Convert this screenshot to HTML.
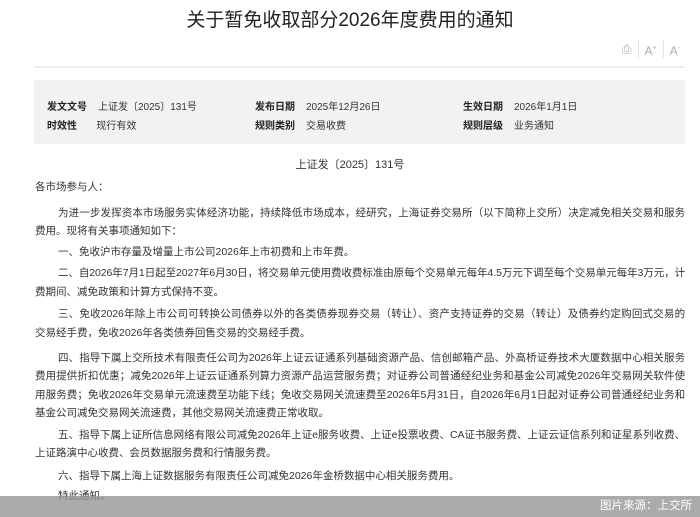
<!DOCTYPE html>
<html><head><meta charset="utf-8"><style>
*{margin:0;padding:0;box-sizing:border-box}
body{width:700px;height:517px;overflow:hidden;background:#fff;font-family:"Liberation Sans","Noto Sans CJK SC",sans-serif;color:#333;position:relative}
.title{position:absolute;top:5px;left:0;width:700px;text-align:center;font-size:19px;color:#222}
.icons{position:absolute;top:40px;right:14px;display:flex;align-items:center;color:#aaa;font-size:12px}
.icons span{display:inline-block;padding:0 6px;height:18px;line-height:18px}
.icons .sep{border-left:1px solid #e5e5e5}
.hr{position:absolute;top:66px;left:34px;width:651px;height:2px;background:#eee}
.meta{position:absolute;top:80px;left:34px;width:651px;height:64px;background:#f2f2f2;font-size:10px}
.meta div{position:absolute;white-space:nowrap}
.meta b{font-weight:bold;color:#222;margin-right:11px}
.doc{position:absolute;top:156px;left:0;width:700px;text-align:center;font-size:11px}
.body{position:absolute;left:35px;width:650px;font-size:10.5px;overflow:hidden;height:517px}
.l{position:absolute;left:0;white-space:nowrap;height:16px;line-height:16px}
.j{width:650px;text-align:justify;text-align-last:justify;letter-spacing:-0.1px}
.in{left:23px}
.in.j{width:627px}
.bar{position:absolute;left:0;top:496px;width:700px;height:21px;background:rgba(150,150,150,0.8);color:#fff;font-size:11.5px;text-align:right;padding-right:8px;line-height:21px}
</style></head><body>
<div class="title">关于暂免收取部分2026年度费用的通知</div>
<div class="icons"><span>&#9113;</span><span class="sep">A<sup style="font-size:7px">+</sup></span><span class="sep">A<sup style="font-size:7px">-</sup></span></div>
<div class="hr"></div>
<div class="meta">
<div style="left:13px;top:18px"><b>发文文号</b>上证发〔2025〕131号</div>
<div style="left:221px;top:18px"><b>发布日期</b>2025年12月26日</div>
<div style="left:429px;top:18px"><b>生效日期</b>2026年1月1日</div>
<div style="left:13px;top:37px"><b>时效性</b>&nbsp;&nbsp;&nbsp;现行有效</div>
<div style="left:221px;top:37px"><b>规则类别</b>交易收费</div>
<div style="left:429px;top:37px"><b>规则层级</b>业务通知</div>
</div>
<div class="doc">上证发〔2025〕131号</div>
<div class="body" style="top:0">
<div class="l" style="top:179px">各市场参与人：</div>
<div class="l in j" style="top:205px">为进一步发挥资本市场服务实体经济功能，持续降低市场成本，经研究，上海证券交易所（以下简称上交所）决定减免相关交易和服务</div>
<div class="l" style="top:223px">费用。现将有关事项通知如下：</div>
<div class="l in" style="top:244px">一、免收沪市存量及增量上市公司2026年上市初费和上市年费。</div>
<div class="l in j" style="top:265px">二、自2026年7月1日起至2027年6月30日，将交易单元使用费收费标准由原每个交易单元每年4.5万元下调至每个交易单元每年3万元，计</div>
<div class="l" style="top:284px">费期间、减免政策和计算方式保持不变。</div>
<div class="l in j" style="top:306px">三、免收2026年除上市公司可转换公司债券以外的各类债券现券交易（转让）、资产支持证券的交易（转让）及债券约定购回式交易的</div>
<div class="l" style="top:325px">交易经手费，免收2026年各类债券回售交易的交易经手费。</div>
<div class="l in j" style="top:350px">四、指导下属上交所技术有限责任公司为2026年上证云证通系列基础资源产品、信创邮箱产品、外高桥证券技术大厦数据中心相关服务</div>
<div class="l j" style="top:368px">费用提供折扣优惠；减免2026年上证云证通系列算力资源产品运营服务费；对证券公司普通经纪业务和基金公司减免2026年交易网关软件使</div>
<div class="l j" style="top:387px">用服务费；免收2026年交易单元流速费至功能下线；免收交易网关流速费至2026年5月31日，自2026年6月1日起对证券公司普通经纪业务和</div>
<div class="l" style="top:405px">基金公司减免交易网关流速费，其他交易网关流速费正常收取。</div>
<div class="l in j" style="top:427px">五、指导下属上证所信息网络有限公司减免2026年上证e服务收费、上证e投票收费、CA证书服务费、上证云证信系列和证星系列收费、</div>
<div class="l" style="top:445px">上证路演中心收费、会员数据服务费和行情服务费。</div>
<div class="l in" style="top:468px">六、指导下属上海上证数据服务有限责任公司减免2026年金桥数据中心相关服务费用。</div>
<div class="l in" style="top:488px">特此通知。</div>
</div>
<div class="bar">图片来源：上交所</div>
</body></html>
